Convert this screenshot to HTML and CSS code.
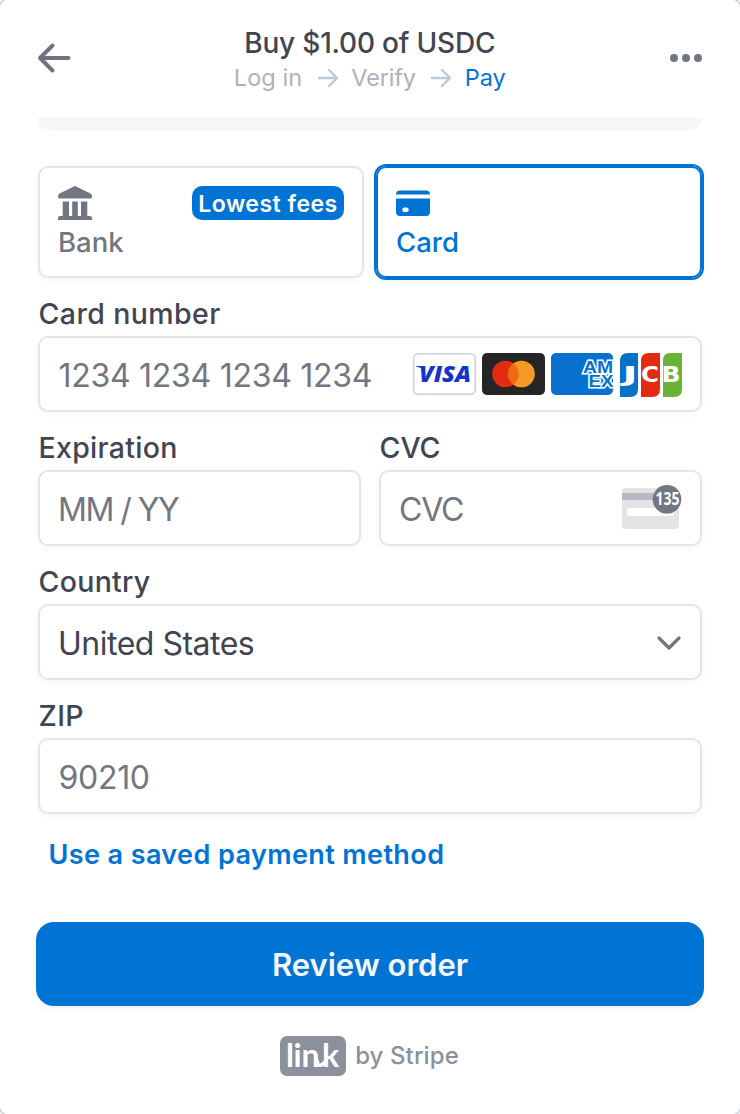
FILE: index.html
```html
<!DOCTYPE html>
<html lang="en">
<head>
<meta charset="utf-8">
<title>Buy USDC</title>
<link rel="stylesheet" href="styles.css">
</head>
<body>
<main class="panel">
  <header class="header">
    <svg class="back" width="34" height="32" viewBox="0 0 34 32"><path d="M15.500 3.500L3 16L15.500 28.500M3 16H31.500"/></svg>
    <div class="heading">
      <h1 class="title">Buy $1.00 of USDC</h1>
      <div class="steps">
        <span class="step-login">Log in</span>
        <svg class="arrow" width="22" height="20" viewBox="0 0 22 20"><path d="M2 10H20M12 2L20 10L12 18"/></svg>
        <span class="step-verify">Verify</span>
        <svg class="arrow" width="22" height="20" viewBox="0 0 22 20"><path d="M2 10H20M12 2L20 10L12 18"/></svg>
        <span class="step-pay">Pay</span>
      </div>
    </div>
    <svg class="more" width="34" height="12" viewBox="0 0 34 12"><circle cx="5" cy="6" r="4"/><circle cx="17" cy="6" r="4"/><circle cx="29" cy="6" r="4"/></svg>
  </header>
  <div class="strip"></div>

  <section class="methods">
    <div class="method">
      <div class="method-top">
        <svg class="bank-icon" width="34" height="34" viewBox="0 0 34 34"><path d="M17 0L32.500 7.500Q34 8.500 34 10V11Q34 12.500 32.500 12.500H1.500Q0 12.500 0 11V10Q0 8.500 1.500 7.500ZM4.700 15.500H11V30H14.200V15.500H19.800V30H23V15.500H29.300V30H32Q34 30 34 32V34H0V32Q0 30 2 30H4.700Z"/></svg>
        <span class="badge">Lowest fees</span>
      </div>
      <span class="method-name">Bank</span>
    </div>
    <div class="method selected">
      <div class="method-top">
        <svg class="card-icon" width="34" height="34" viewBox="0 0 34 34"><path d="M4 4.500H30Q34 4.500 34 8.500H0Q0 4.500 4 4.500ZM0 12.500H34V26Q34 30 30 30H4Q0 30 0 26ZM8.500 21.500A2.250 2.250 0 0 0 8.500 26H10.500A2.250 2.250 0 0 0 10.500 21.500Z"/></svg>
      </div>
      <span class="method-name">Card</span>
    </div>
  </section>

  <div class="field">
    <label class="label label-number">Card number</label>
    <div class="input">
      <span class="value number">1234 1234 1234 1234</span>
      <div class="brands">
        <svg width="63" height="42" viewBox="0 0 63 42"><rect x=".75" y=".75" width="61.500" height="40.500" rx="4.500" fill="#fff" stroke="#c9d1dc" stroke-width="1.500"/><text class="visa" x="6" y="29" textLength="52" lengthAdjust="spacingAndGlyphs">VISA</text><path d="M3 13H9L12 18Q9 14.500 3 13.500Z" fill="#1434cb"/></svg>
        <svg width="63" height="42" viewBox="0 0 63 42"><rect width="63" height="42" rx="5" fill="#252525"/><circle cx="23.500" cy="21" r="13.300" fill="#e42a10"/><circle cx="39.500" cy="21" r="13.300" fill="#f59a23"/><path d="M31.500 10.400A13.300 13.300 0 0 1 31.500 31.600A13.300 13.300 0 0 1 31.500 10.400Z" fill="#ee6a12"/></svg>
        <svg width="62" height="42" viewBox="0 0 62 42"><clipPath id="amex"><rect width="62" height="42" rx="5"/></clipPath><rect width="62" height="42" rx="5" fill="#0871d0"/><g class="amex" clip-path="url(#amex)"><text x="32" y="19.500" textLength="30" lengthAdjust="spacingAndGlyphs">AM</text><text x="37.500" y="34" textLength="25" lengthAdjust="spacingAndGlyphs">EX</text></g></svg>
        <svg width="62" height="44" viewBox="0 0 62 44"><path d="M8 0H18V36Q18 44 10 44H0V8Q0 0 8 0Z" fill="#0871c9"/><path d="M29 0H40V36Q40 44 32 44H21V8Q21 0 29 0Z" fill="#e42a10"/><path d="M50 0H62V36Q62 44 54 44H43V8Q43 0 50 0Z" fill="#69b437"/><g class="jcb"><text x="2.500" y="29" textLength="15" lengthAdjust="spacingAndGlyphs">J</text><text x="21" y="29" textLength="18" lengthAdjust="spacingAndGlyphs">C</text><text x="41.500" y="29" textLength="19" lengthAdjust="spacingAndGlyphs">B</text></g></svg>
      </div>
    </div>
  </div>

  <div class="pair">
    <div class="field">
      <label class="label label-exp">Expiration</label>
      <div class="input"><span class="value exp">MM / YY</span></div>
    </div>
    <div class="field">
      <label class="label">CVC</label>
      <div class="input">
        <span class="value cvc">CVC</span>
        <svg class="cvc-icon" width="60" height="46" viewBox="0 0 60 46"><rect x="0" y="3" width="57" height="41" rx="4" fill="#e4e4e4"/><path d="M0 8H57V15H0Z" fill="#b5bac3"/><rect x="5" y="23" width="47" height="8" rx="2" fill="#fff"/><circle cx="45" cy="14.300" r="14.300" fill="#727682"/><text x="33.500" y="20" textLength="24" lengthAdjust="spacingAndGlyphs">135</text></svg>
      </div>
    </div>
  </div>

  <div class="field">
    <label class="label label-country">Country</label>
    <div class="input">
      <span class="value country">United States</span>
      <svg class="chevron" width="26" height="18" viewBox="0 0 26 18"><path d="M3 4L13 14L23 4"/></svg>
    </div>
  </div>

  <div class="field">
    <label class="label label-zip">ZIP</label>
    <div class="input"><span class="value zip">90210</span></div>
  </div>

  <a class="saved">Use a saved payment method</a>
  <button class="review"><span>Review order</span></button>

  <footer class="footer">
    <svg width="66" height="40" viewBox="0 0 66 40"><rect width="66" height="40" rx="7" fill="#8b909d"/><text class="link-logo" x="6 13.500 21.500 42" y="31">link</text><path class="link-join" d="M37.300 25Q37.500 29.800 40.500 29.300Q43.500 28.800 46 24.500"/></svg>
    <span class="by">by Stripe</span>
  </footer>
</main>
</body>
</html>
```

FILE: styles.css
```css
* { box-sizing: border-box; }
html { background: #fff; }
body { margin: 0; font-family: Inter, "Liberation Sans", sans-serif; color: #414552; }

.panel {
  width: 740px;
  height: 1114px;
  padding: 0 38px;
  overflow: hidden;
  background: #fff;
  border-radius: 7px;
  box-shadow: 0 0 0 1px #b9c4d0;
}

.header { display: flex; justify-content: space-between; height: 118px; padding-top: 24px; }
.back { margin: 18px 0 0 -1.5px; fill: none; stroke: #6f7380; stroke-width: 4; stroke-linecap: round; stroke-linejoin: round; }
.more { margin-top: 28px; margin-right: -1px; fill: #727682; }
.heading { display: flex; flex-direction: column; align-items: center; }
.title { margin: 0; font-size: 28px; line-height: 38px; font-weight: 500; letter-spacing: -.2px; white-space: nowrap; }
.steps { display: flex; align-items: center; height: 31px; font-size: 23.5px; color: #adb1bb; white-space: nowrap; }
.step-login { letter-spacing: .1px; }
.step-verify { letter-spacing: -.2px; }
.arrow { margin: 0 12.5px 0 14.5px; fill: none; stroke: #bdc9d8; stroke-width: 2.4; stroke-linecap: round; stroke-linejoin: round; }
.step-pay { color: #0074d4; }

.strip { height: 12px; background: #f5f6f8; border-radius: 0 0 14px 14px; }

.methods { display: grid; grid-template-columns: 326px 326px; gap: 12px; margin-top: 36px; }
.method {
  height: 112px;
  padding: 18px;
  border: 2px solid #e4e5e7;
  border-radius: 10px;
  box-shadow: 0 2px 6px rgba(0, 0, 0, .04);
  color: #727682;
}
.selected { border-color: #0074d4; box-shadow: 0 0 0 2px #0074d4, 0 4px 6px rgba(0, 0, 0, .04); color: #0074d4; }
.method-top { display: flex; justify-content: space-between; height: 34px; }
.bank-icon, .card-icon { fill: currentColor; fill-rule: evenodd; }
.badge {
  width: 152px;
  border-radius: 10px;
  background: #0074d4;
  color: #fff;
  font-size: 23px;
  line-height: 36px;
  font-weight: 600;
  letter-spacing: .5px;
  text-align: center;
  white-space: nowrap;
}
.method-name { display: block; margin-top: 4px; font-size: 27.5px; line-height: 37px; font-weight: 500; }

.methods + .field { margin-top: 18px; }
.label { display: block; height: 40px; padding-left: .5px; font-size: 28.5px; line-height: 36px; font-weight: 500; }
.label-number { letter-spacing: .4px; }
.label-exp { letter-spacing: .3px; }
.label-country { letter-spacing: .3px; }
.label-zip { letter-spacing: .4px; }
.field { margin-top: 18px; }
.input {
  display: flex;
  align-items: center;
  justify-content: space-between;
  height: 76px;
  padding: 0 18px;
  border: 2px solid #e4e5e7;
  border-radius: 10px;
  box-shadow: 0 2px 6px rgba(0, 0, 0, .04);
}
.value { padding: 3px 0 0; font-size: 32px; line-height: 40px; color: #727682; white-space: nowrap; }
.number { padding-left: .5px; letter-spacing: -.27px; }
.exp { letter-spacing: -1.5px; }
.cvc { letter-spacing: -1.2px; }
.country { color: #414552; letter-spacing: -.5px; }
.zip { padding-left: .5px; letter-spacing: -.3px; }
.pair { display: grid; grid-template-columns: 323px 323px; gap: 18px; }
.brands { display: flex; gap: 6px; height: 44px; padding-top: 1px; }
.brands svg { flex: none; }
.brands svg:last-child { margin-left: 1px; }
.visa { font: italic 800 23px "Open Sans", sans-serif; fill: #1434cb; }
.amex { font: 700 17px "Liberation Sans", sans-serif; fill: #0871d0; stroke: #fff; stroke-width: 3px; paint-order: stroke; }
.jcb { font: 700 22px "DejaVu Sans", sans-serif; fill: #fff; }
.cvc-icon { overflow: visible; }
.cvc-icon text { font: 700 17px "Noto Sans", sans-serif; fill: #fff; }
.chevron { margin-top: 1px; fill: none; stroke: #727682; stroke-width: 3.2; stroke-linecap: round; stroke-linejoin: round; }

.saved { display: block; margin: 22px 0 0 10.5px; font-size: 27px; line-height: 37px; font-weight: 600; letter-spacing: .4px; color: #0074d4; white-space: nowrap; }
.review {
  display: block;
  width: 668px;
  height: 84px;
  margin: 49px 0 0 -2px;
  padding: 2px 0 0;
  border: 0;
  border-radius: 18px;
  background: #0074d4;
  box-shadow: 0 3px 6px rgba(0, 0, 0, .06);
  color: #f5f6f8;
  font: 600 31px/40px Inter, sans-serif;
}

.footer { display: flex; align-items: center; justify-content: center; gap: 9px; height: 40px; margin: 30px 1px 0 0; }
.link-logo { font: 700 32px Lato, sans-serif; fill: #fff; }
.link-join { fill: none; stroke: #fff; stroke-width: 3.5; stroke-linecap: round; }
.by { font-size: 24px; line-height: 32px; font-weight: 500; letter-spacing: .1px; color: #8b909d; white-space: nowrap; }
```
